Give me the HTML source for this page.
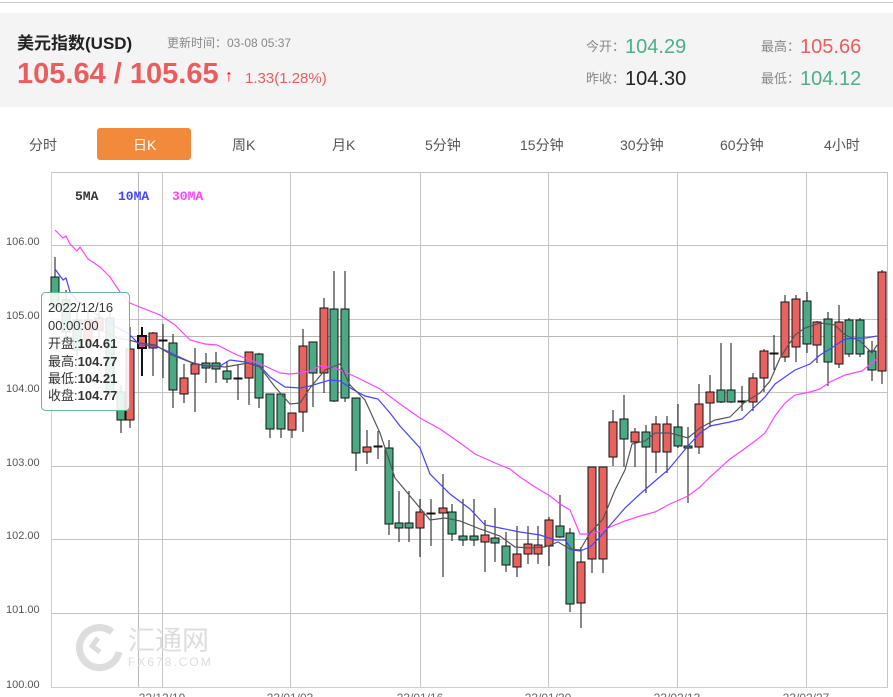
<!DOCTYPE html>
<html><head><meta charset="utf-8">
<style>
*{margin:0;padding:0;box-sizing:border-box}
body{width:893px;height:697px;overflow:hidden;background:#fff;font-family:"Liberation Sans","Noto Sans CJK SC",sans-serif;position:relative}
.a{position:absolute;white-space:nowrap}
</style></head><body>
<div class="a" style="left:0;top:2px;width:893px;height:1px;background:#ccc"></div>
<div class="a" style="left:0;top:13px;width:893px;height:94px;background:#f4f4f4"></div>
<div class="a" style="left:17px;top:29px;font-size:17px;font-weight:bold;color:#222">美元指数(USD)</div>
<div class="a" style="left:167px;top:34px;font-size:12px;color:#888">更新时间：03-08 05:37</div>
<div class="a" style="left:17px;top:58px;font-size:29px;font-weight:bold;color:#e85d5d">105.64 / 105.65</div>
<div class="a" style="left:225px;top:68px;font-size:16px;font-weight:bold;color:#e00">&#8593;</div>
<div class="a" style="left:245px;top:70px;font-size:15px;color:#e85d5d">1.33(1.28%)</div>
<div class="a" style="left:586px;top:34px;font-size:13px;color:#888">今开：<span style="font-size:20px;color:#4caf87;position:relative;top:2px">104.29</span></div>
<div class="a" style="left:761px;top:34px;font-size:13px;color:#888">最高：<span style="font-size:20px;color:#e85d5d;position:relative;top:2px">105.66</span></div>
<div class="a" style="left:586px;top:66px;font-size:13px;color:#888">昨收：<span style="font-size:20px;color:#222;position:relative;top:2px">104.30</span></div>
<div class="a" style="left:761px;top:66px;font-size:13px;color:#888">最低：<span style="font-size:20px;color:#4caf87;position:relative;top:2px">104.12</span></div>

<div class="a" style="left:97px;top:128px;width:94px;height:32px;background:#f28a3c;border-radius:3px"></div>
<div class="a" style="left:0;top:135px;width:893px;font-size:14px;color:#555">
<span class="a" style="left:29px">分时</span>
<span class="a" style="left:133px;color:#fff">日K</span>
<span class="a" style="left:232px">周K</span>
<span class="a" style="left:332px">月K</span>
<span class="a" style="left:425px">5分钟</span>
<span class="a" style="left:520px">15分钟</span>
<span class="a" style="left:620px">30分钟</span>
<span class="a" style="left:720px">60分钟</span>
<span class="a" style="left:824px">4小时</span>
</div>

<svg class="a" style="left:0;top:0" width="893" height="697" xmlns="http://www.w3.org/2000/svg">
<g stroke="#c4c4c4" stroke-width="1">
<line x1="51" y1="172.5" x2="888" y2="172.5"/>
<line x1="51" y1="245.5" x2="888" y2="245.5"/>
<line x1="51" y1="319.5" x2="888" y2="319.5"/>
<line x1="51" y1="336.5" x2="888" y2="336.5" stroke="#b8b8b0"/>
<line x1="51" y1="392.5" x2="888" y2="392.5"/>
<line x1="51" y1="466.5" x2="888" y2="466.5"/>
<line x1="51" y1="539.5" x2="888" y2="539.5"/>
<line x1="51" y1="613.5" x2="888" y2="613.5"/>
<line x1="162.5" y1="172" x2="162.5" y2="688"/>
<line x1="290.5" y1="172" x2="290.5" y2="688"/>
<line x1="420.5" y1="172" x2="420.5" y2="688"/>
<line x1="548.5" y1="172" x2="548.5" y2="688"/>
<line x1="677.5" y1="172" x2="677.5" y2="688"/>
<line x1="806.5" y1="172" x2="806.5" y2="688"/>
<line x1="887.5" y1="172" x2="887.5" y2="688"/>
<line x1="138.5" y1="172" x2="138.5" y2="688" stroke="#b8b8b0"/>
</g>
<line x1="51.5" y1="172" x2="51.5" y2="688" stroke="#c9d0d8"/>
<line x1="51" y1="687.5" x2="888" y2="687.5" stroke="#c9d0d8"/>
<g font-size="11" fill="#555" font-family="Liberation Sans,sans-serif">
<text x="6" y="245">106.00</text><text x="6" y="319">105.00</text><text x="6" y="392">104.00</text>
<text x="6" y="466">103.00</text><text x="6" y="539">102.00</text><text x="6" y="613">101.00</text><text x="6" y="688">100.00</text>
</g>
<g font-size="12" fill="#666" text-anchor="middle" font-family="Liberation Sans,sans-serif">
<text x="162" y="702">22/12/19</text><text x="290" y="702">23/01/03</text><text x="420" y="702">23/01/16</text>
<text x="548" y="702">23/01/30</text><text x="677" y="702">23/02/13</text><text x="806" y="702">23/02/27</text>
</g>
<g font-size="13" font-weight="bold" font-family="Liberation Mono,monospace">
<text x="75" y="200" fill="#333">5MA</text><text x="118" y="200" fill="#4444ff">10MA</text><text x="172" y="200" fill="#ff44ff">30MA</text>
</g>
<g fill="none" stroke="#ddd" stroke-width="7"><path d="M112 632 A20 20 0 1 0 119 652"/><path d="M98 638 L92 646 L100 652" stroke-width="5"/></g>
<text x="128" y="650" font-size="27" fill="#ddd" font-family="Noto Sans CJK SC,sans-serif">汇通网</text>
<text x="128" y="666" font-size="12" fill="#ddd" letter-spacing="2" font-family="Liberation Sans,sans-serif">FX678.COM</text>

<g stroke="#111" stroke-width="1">
<g fill="#4aaa84">
<line x1="55" y1="257" x2="55" y2="312"/><rect x="51" y="277" width="8" height="30"/>
<line x1="66" y1="290" x2="66" y2="340"/><rect x="62" y="300" width="8" height="32"/>
<line x1="77" y1="310" x2="77" y2="360"/><rect x="73" y="320" width="8" height="30"/>
<line x1="110" y1="310" x2="110" y2="400"/><rect x="106" y="318" width="8" height="74"/>
<line x1="121" y1="385" x2="121" y2="433"/><rect x="117" y="392" width="8" height="28"/>
<line x1="173" y1="334" x2="173" y2="408"/><rect x="169" y="343" width="8" height="47"/>
<line x1="206" y1="353" x2="206" y2="383"/><rect x="202" y="363" width="8" height="5"/>
<line x1="216" y1="352" x2="216" y2="383"/><rect x="212" y="363" width="8" height="6"/>
<line x1="227" y1="361" x2="227" y2="383"/><rect x="223" y="371" width="8" height="8"/>
<line x1="259" y1="353" x2="259" y2="408"/><rect x="255" y="354" width="8" height="44"/>
<line x1="270" y1="394" x2="270" y2="438"/><rect x="266" y="394" width="8" height="35"/>
<line x1="281" y1="394" x2="281" y2="438"/><rect x="277" y="394" width="8" height="35"/>
<line x1="313" y1="342" x2="313" y2="407"/><rect x="309" y="342" width="8" height="31"/>
<line x1="334" y1="271" x2="334" y2="402"/><rect x="330" y="309" width="8" height="92"/>
<line x1="345" y1="271" x2="345" y2="402"/><rect x="341" y="309" width="8" height="89"/>
<line x1="356" y1="398" x2="356" y2="471"/><rect x="352" y="398" width="8" height="55"/>
<line x1="389" y1="440" x2="389" y2="535"/><rect x="385" y="448" width="8" height="76"/>
<line x1="399" y1="491" x2="399" y2="542"/><rect x="395" y="523" width="8" height="5"/>
<line x1="409" y1="491" x2="409" y2="542"/><rect x="405" y="523" width="8" height="5"/>
<line x1="452" y1="504" x2="452" y2="541"/><rect x="448" y="512" width="8" height="22"/>
<line x1="463" y1="499" x2="463" y2="546"/><rect x="459" y="536" width="8" height="4"/>
<line x1="474" y1="499" x2="474" y2="546"/><rect x="470" y="536" width="8" height="4"/>
<line x1="495" y1="508" x2="495" y2="562"/><rect x="491" y="538" width="8" height="5"/>
<line x1="506" y1="532" x2="506" y2="572"/><rect x="502" y="546" width="8" height="19"/>
<line x1="560" y1="495" x2="560" y2="538"/><rect x="556" y="526" width="8" height="11"/>
<line x1="570" y1="528" x2="570" y2="612"/><rect x="566" y="533" width="8" height="71"/>
<line x1="624" y1="395" x2="624" y2="467"/><rect x="620" y="419" width="8" height="20"/>
<line x1="646" y1="425" x2="646" y2="493"/><rect x="642" y="432" width="8" height="15"/>
<line x1="678" y1="404" x2="678" y2="448"/><rect x="674" y="427" width="8" height="19"/>
<line x1="688" y1="427" x2="688" y2="503"/><rect x="684" y="446" width="8" height="2"/>
<line x1="721" y1="343" x2="721" y2="403"/><rect x="717" y="390" width="8" height="12"/>
<line x1="731" y1="343" x2="731" y2="403"/><rect x="727" y="390" width="8" height="12"/>
<line x1="807" y1="292" x2="807" y2="353"/><rect x="803" y="301" width="8" height="43"/>
<line x1="828" y1="312" x2="828" y2="386"/><rect x="824" y="319" width="8" height="43"/>
<line x1="849" y1="318" x2="849" y2="357"/><rect x="845" y="320" width="8" height="34"/>
<line x1="860" y1="318" x2="860" y2="357"/><rect x="856" y="320" width="8" height="34"/>
<line x1="872" y1="341" x2="872" y2="381"/><rect x="868" y="351" width="8" height="19"/>
</g>
<g fill="#e8625f">
<line x1="88" y1="310" x2="88" y2="350"/><rect x="84" y="320" width="8" height="20"/>
<line x1="99" y1="310" x2="99" y2="340"/><rect x="95" y="318" width="8" height="12"/>
<line x1="130" y1="327" x2="130" y2="428"/><rect x="126" y="349" width="8" height="71"/>
<line x1="142" y1="327" x2="142" y2="376" stroke-width="2"/><rect x="138" y="336" width="8" height="12" stroke-width="2"/>
<line x1="153" y1="332" x2="153" y2="376"/><rect x="149" y="333" width="8" height="15"/>
<line x1="184" y1="364" x2="184" y2="403"/><rect x="180" y="378" width="8" height="16"/>
<line x1="195" y1="348" x2="195" y2="412"/><rect x="191" y="364" width="8" height="10"/>
<line x1="249" y1="352" x2="249" y2="405"/><rect x="245" y="352" width="8" height="26"/>
<line x1="292" y1="413" x2="292" y2="438"/><rect x="288" y="413" width="8" height="17"/>
<line x1="303" y1="329" x2="303" y2="432"/><rect x="299" y="346" width="8" height="66"/>
<line x1="324" y1="298" x2="324" y2="393"/><rect x="320" y="308" width="8" height="65"/>
<line x1="367" y1="430" x2="367" y2="464"/><rect x="363" y="447" width="8" height="5"/>
<line x1="420" y1="499" x2="420" y2="557"/><rect x="416" y="512" width="8" height="16"/>
<line x1="443" y1="474" x2="443" y2="577"/><rect x="439" y="508" width="8" height="5"/>
<line x1="485" y1="520" x2="485" y2="572"/><rect x="481" y="535" width="8" height="7"/>
<line x1="517" y1="526" x2="517" y2="577"/><rect x="513" y="554" width="8" height="13"/>
<line x1="528" y1="526" x2="528" y2="564"/><rect x="524" y="544" width="8" height="10"/>
<line x1="538" y1="526" x2="538" y2="564"/><rect x="534" y="545" width="8" height="9"/>
<line x1="549" y1="517" x2="549" y2="566"/><rect x="545" y="520" width="8" height="26"/>
<line x1="581" y1="547" x2="581" y2="628"/><rect x="577" y="562" width="8" height="41"/>
<line x1="592" y1="467" x2="592" y2="573"/><rect x="588" y="467" width="8" height="92"/>
<line x1="603" y1="467" x2="603" y2="573"/><rect x="599" y="467" width="8" height="92"/>
<line x1="613" y1="410" x2="613" y2="466"/><rect x="609" y="422" width="8" height="35"/>
<line x1="635" y1="428" x2="635" y2="467"/><rect x="631" y="432" width="8" height="10"/>
<line x1="656" y1="416" x2="656" y2="473"/><rect x="652" y="424" width="8" height="28"/>
<line x1="667" y1="416" x2="667" y2="473"/><rect x="663" y="424" width="8" height="28"/>
<line x1="699" y1="384" x2="699" y2="454"/><rect x="695" y="404" width="8" height="43"/>
<line x1="710" y1="375" x2="710" y2="427"/><rect x="706" y="392" width="8" height="11"/>
<line x1="753" y1="373" x2="753" y2="411"/><rect x="749" y="378" width="8" height="24"/>
<line x1="764" y1="349" x2="764" y2="392"/><rect x="760" y="351" width="8" height="27"/>
<line x1="785" y1="295" x2="785" y2="362"/><rect x="781" y="302" width="8" height="55"/>
<line x1="796" y1="295" x2="796" y2="362"/><rect x="792" y="299" width="8" height="48"/>
<line x1="817" y1="321" x2="817" y2="363"/><rect x="813" y="322" width="8" height="23"/>
<line x1="839" y1="305" x2="839" y2="368"/><rect x="835" y="322" width="8" height="42"/>
<line x1="882" y1="270" x2="882" y2="384"/><rect x="878" y="272" width="8" height="99"/>
</g>
<g fill="#111">
<line x1="163" y1="324" x2="163" y2="378"/><rect x="159" y="340" width="8" height="1"/>
<line x1="238" y1="364" x2="238" y2="400"/><rect x="234" y="378" width="8" height="1"/>
<line x1="378" y1="431" x2="378" y2="459"/><rect x="374" y="446" width="8" height="1"/>
<line x1="431" y1="499" x2="431" y2="546"/><rect x="427" y="513" width="8" height="1"/>
<line x1="742" y1="386" x2="742" y2="411"/><rect x="738" y="401" width="8" height="1"/>
<line x1="774" y1="335" x2="774" y2="370"/><rect x="770" y="353" width="8" height="1"/>
</g>
</g>
<g fill="none" stroke-width="1.2">
<polyline stroke="#ff44ff" points="55,230 63,238 66,236 70,244 77,251 80,247 88,259 100,267 110,277 120,292 130,303 142,308 160,315 175,325 190,340 205,344 217,345 237,355 250,360 265,366 280,373 290,374 300,373 310,371 320,366 335,368 345,372 360,379 380,389 400,404 420,418 440,429 460,443 475,454 495,463 510,469 520,477 535,487 550,496 560,504 570,510 580,534 592,534 600,531 610,527 625,521 640,516 655,512 670,504 688,496 700,487 710,477 730,459 740,452 755,441 765,433 775,416 785,403 795,395 810,392 820,389 830,382 845,375 862,371 877,359"/>
<polyline stroke="#4444ff" points="55,269 63,280 66,278 70,292 77,300 90,310 105,320 118,328 129,334 140,345 155,346 165,350 175,355 195,364 210,366 220,366 230,360 245,362 260,366 270,377 285,387 300,388 310,386 330,380 340,381 352,389 365,396 378,399 390,413 400,426 420,448 430,474 450,494 470,509 485,525 500,528 520,532 540,535 555,540 565,540 572,550 580,551 590,547 600,537 612,523 625,508 640,494 655,481 668,470 688,446 700,433 710,426 730,422 742,419 765,397 775,384 795,370 810,364 820,355 830,349 845,339 858,338 866,338 877,336"/>
<polyline stroke="#555" points="80,320 100,330 118,338 129,340 140,343 155,345 172,355 190,362 205,366 215,366 225,367 248,363 260,367 275,387 290,404 300,403 310,388 325,370 340,364 350,385 365,400 380,433 395,478 410,496 430,520 445,518 460,521 480,529 500,536 515,547 530,548 545,547 558,542 570,549 580,550 590,533 603,519 615,490 625,470 632,444 645,441 655,433 670,433 688,438 700,428 715,420 730,417 745,402 760,393 770,381 780,358 795,335 805,328 820,323 835,325 845,335 860,341 872,353 877,345"/>
</g>
<rect x="41.5" y="292.5" width="88" height="118" rx="4" fill="rgba(255,255,255,0.88)" stroke="#6bb59a"/>
<g font-size="13" fill="#333" font-family="Liberation Sans,Noto Sans CJK SC,sans-serif">
<text x="48" y="312">2022/12/16</text>
<text x="48" y="330">00:00:00</text>
<text x="48" y="348">开盘:<tspan font-weight="bold">104.61</tspan></text>
<text x="48" y="366">最高:<tspan font-weight="bold">104.77</tspan></text>
<text x="48" y="383">最低:<tspan font-weight="bold">104.21</tspan></text>
<text x="48" y="400">收盘:<tspan font-weight="bold">104.77</tspan></text>
</g>
</svg>
</body></html>
